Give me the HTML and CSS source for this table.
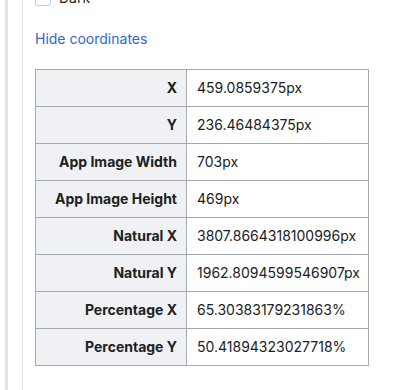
FILE: index.html
```html
<!DOCTYPE html>
<html lang="en">
<head>
<meta charset="utf-8">
<title>Coordinates</title>
<link rel="stylesheet" href="styles.css">
</head>
<body>
<div class="page">
  <div class="rail"></div>
  <div class="main">
    <label class="check-row"><span class="checkbox"></span><span class="check-label">Dark</span></label>
    <a class="toggle-link" href="#">Hide coordinates</a>
    <table class="coords">
      <colgroup><col class="col-key"><col class="col-val"></colgroup>
      <tbody>
        <tr><th>X</th><td>459.0859375px</td></tr>
        <tr><th>Y</th><td>236.46484375px</td></tr>
        <tr><th>App Image Width</th><td>703px</td></tr>
        <tr><th>App Image Height</th><td>469px</td></tr>
        <tr><th>Natural X</th><td>3807.8664318100996px</td></tr>
        <tr><th>Natural Y</th><td>1962.8094599546907px</td></tr>
        <tr><th>Percentage X</th><td>65.30383179231863%</td></tr>
        <tr><th>Percentage Y</th><td>50.41894323027718%</td></tr>
      </tbody>
    </table>
  </div>
</div>
</body>
</html>
```
FILE: styles.css
```css
html, body {
  margin: 0;
  padding: 0;
  background: #ffffff;
}
body {
  font-family: Inter, "Liberation Sans", sans-serif;
  color: #202122;
  font-size: 14px;
}
.page {
  display: flex;
  height: 390px;
  overflow: hidden;
}
.rail {
  width: 3px;
  margin-left: 5px;
  background: #dde3e6;
  flex: none;
}
.main {
  margin-left: 14px;
  border-left: 1px solid #e4e4e4;
  padding-left: 12px;
  flex: 1;
  display: flex;
  flex-direction: column;
  align-items: flex-start;
}
.check-row {
  display: flex;
  align-items: center;
  gap: 8px;
  height: 18px;
  margin-top: -11px;
}
.checkbox {
  width: 14px;
  height: 14px;
  border: 1px solid #c8ccd1;
  border-radius: 3px;
  background: #fff;
}
.check-label {
  font-size: 14px;
  line-height: 18px;
}
.toggle-link {
  margin-top: 22px;
  font-size: 14px;
  line-height: 20px;
  color: #3366cc;
  text-decoration: none;
}
.coords {
  margin-top: 20px;
  border-collapse: collapse;
  table-layout: fixed;
  width: 333px;
  border: 1px solid #a2a9b1;
}
.col-key { width: 151px; }
.col-val { width: 182px; }
.coords th, .coords td {
  border: 1px solid #a2a9b1;
  padding: 8px 9px;
  line-height: 20px;
  font-size: 14px;
  white-space: nowrap;
}
.coords th {
  background: #eff1f4;
  text-align: right;
  font-weight: 700;
}
.coords td {
  text-align: left;
  font-weight: 400;
  padding-left: 10px;
}
```
